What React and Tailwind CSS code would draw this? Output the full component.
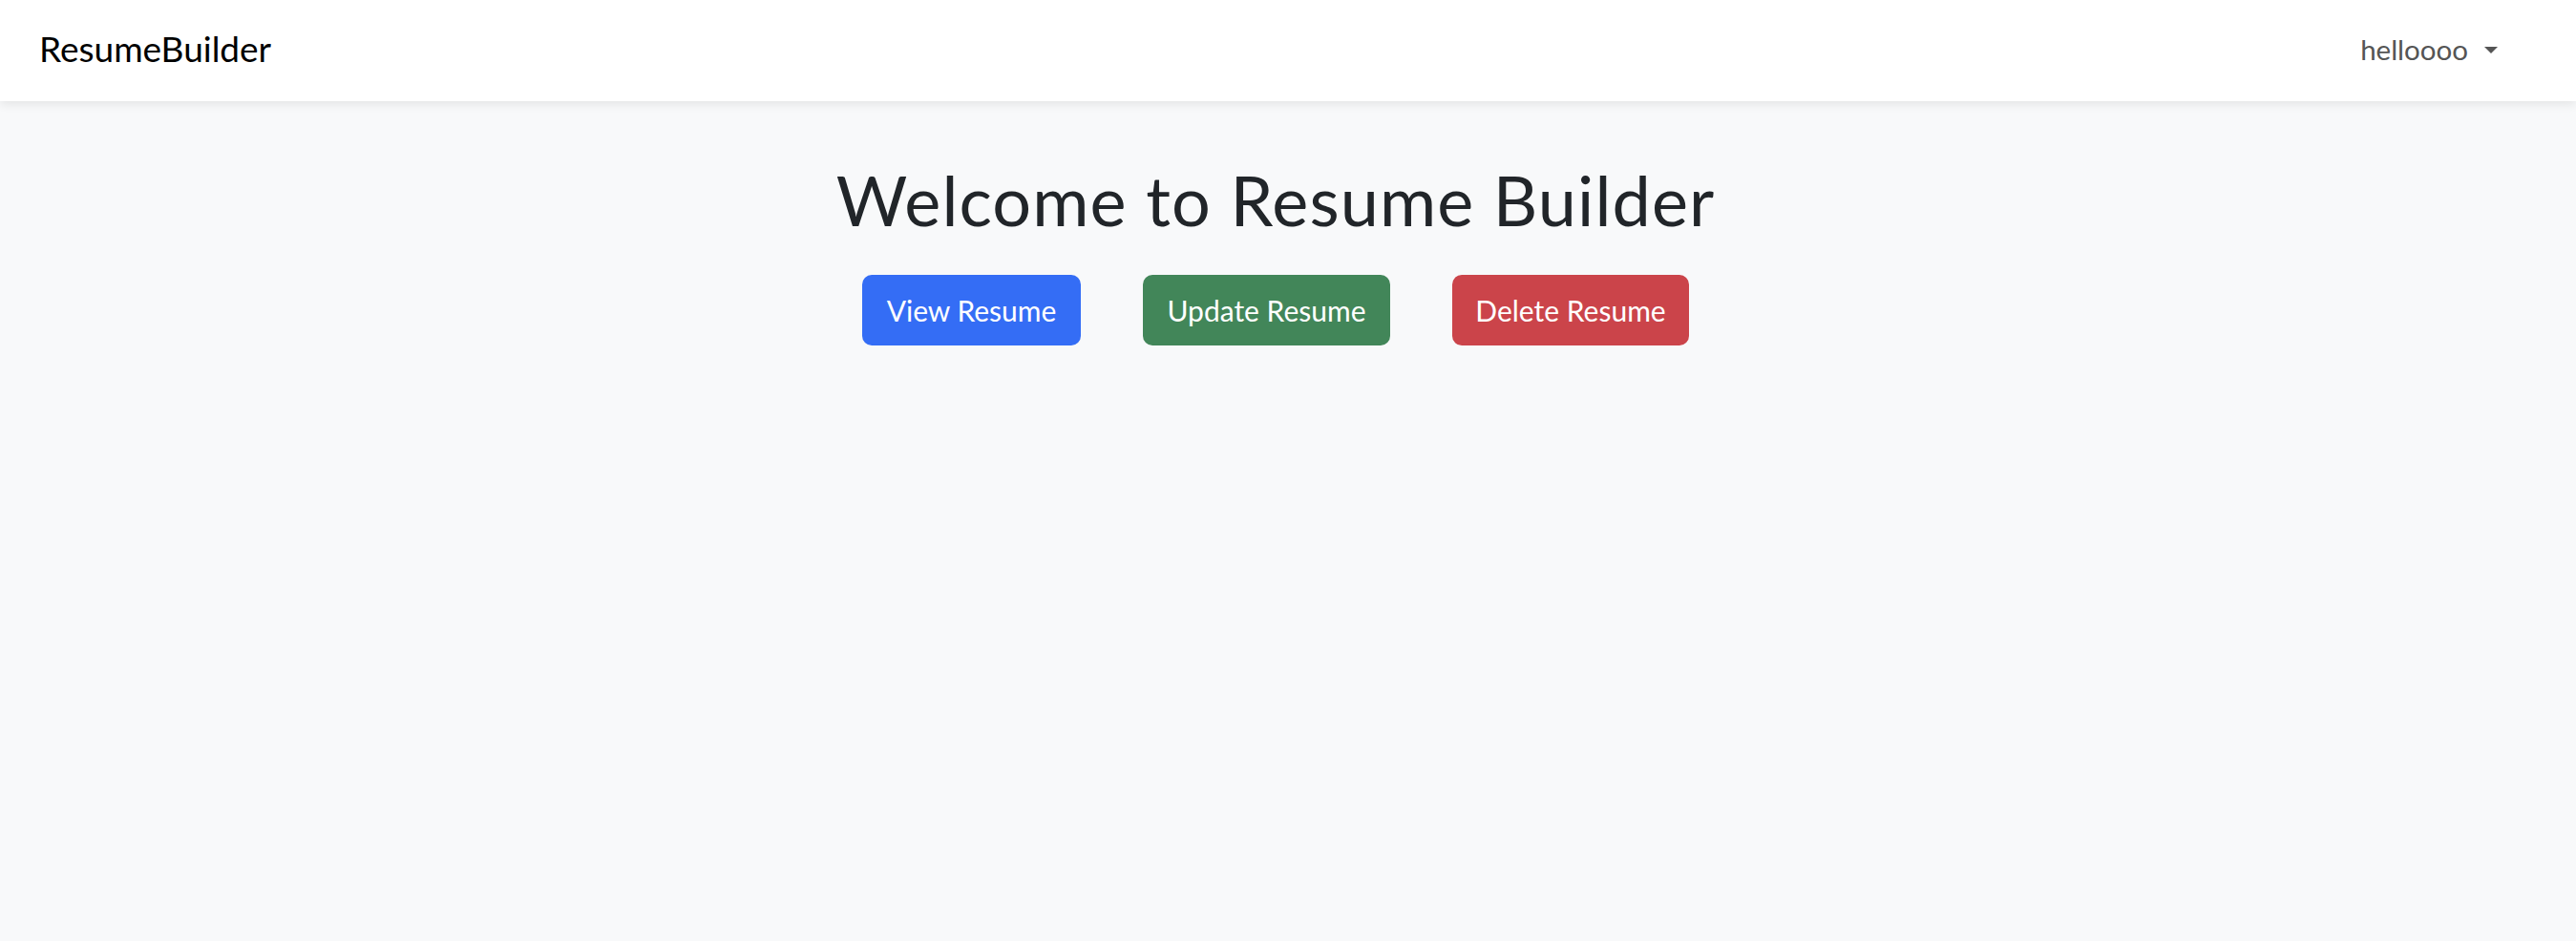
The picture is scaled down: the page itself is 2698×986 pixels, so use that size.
import React from 'react';

const font = { fontFamily: '"Lato", "Noto Sans", sans-serif' };

const Navbar = () => (
  <nav className="relative z-10 flex h-[106px] items-center justify-between bg-white pl-[41px] pr-[82px] shadow-[0_3px_10px_rgba(0,0,0,0.09)]">
    <a className="-mt-[5px] text-[37px] leading-none text-black">ResumeBuilder</a>
    <button className="-mt-[3px] flex items-center gap-[17px] text-[29.5px] leading-none text-[#555555]">
      helloooo
      <span className="mt-[2px] h-0 w-0 border-x-[7px] border-t-[7px] border-x-transparent border-t-[#555555]" />
    </button>
  </nav>
);

const App = () => {
  return (
    <div className="min-h-[986px] bg-[#f8f9fa]" style={font}>
      <Navbar />
      <main className="flex flex-col items-center pr-[26px] pt-[60px]">
        <h1 className="text-[72px] font-normal leading-[1.2] tracking-[1.1px] text-[#212529]">
          Welcome to Resume Builder
        </h1>
        <div className="mt-[36px] flex gap-[65px]">
          <button className="h-[74px] w-[229px] rounded-[10px] bg-[#346df5] text-[30px] text-white">
            View Resume
          </button>
          <button className="h-[74px] w-[259px] rounded-[10px] bg-[#428659] text-[30px] text-white">
            Update Resume
          </button>
          <button className="h-[74px] w-[248px] rounded-[10px] bg-[#cb444a] text-[30px] text-white">
            Delete Resume
          </button>
        </div>
      </main>
    </div>
  );
};

export default App;
